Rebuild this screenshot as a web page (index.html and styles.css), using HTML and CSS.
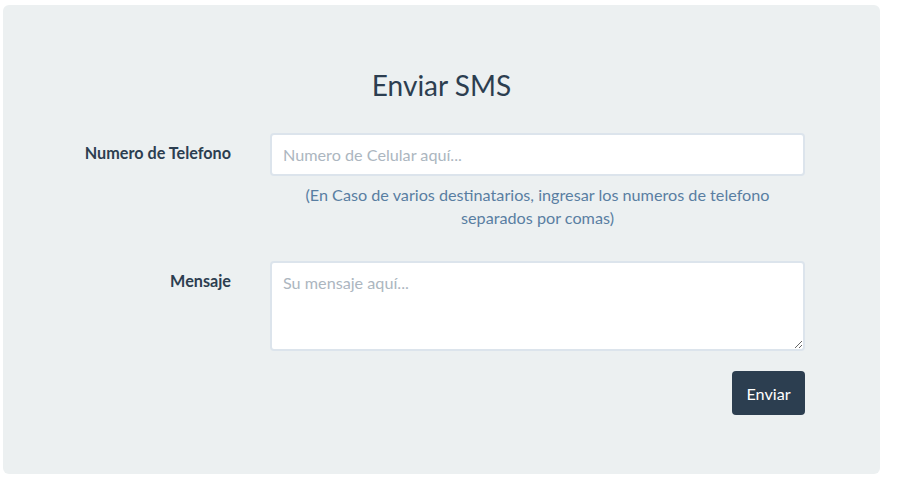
FILE: index.html
```html
<!DOCTYPE html>
<html lang="es">
<head>
<meta charset="utf-8">
<title>Enviar SMS</title>
<link rel="stylesheet" href="styles.css">
</head>
<body>
<div class="panel">
  <h3 class="title">Enviar SMS</h3>
  <form class="form">
    <label class="label" for="tel">Numero de Telefono</label>
    <div class="field">
      <input id="tel" class="control" type="text" placeholder="Numero de Celular aquí...">
      <p class="help">(En Caso de varios destinatarios, ingresar los numeros de telefono separados por comas)</p>
    </div>
    <label class="label" for="msg">Mensaje</label>
    <div class="field">
      <textarea id="msg" class="control area" placeholder="Su mensaje aquí..."></textarea>
      <div class="actions"><button type="button" class="btn">Enviar</button></div>
    </div>
  </form>
</div>
</body>
</html>
```

FILE: styles.css
```css
* { box-sizing: border-box; }
html, body { margin: 0; background: #fff; }
body {
  font-family: Lato, "Open Sans", sans-serif;
  font-size: 16.2px;
  line-height: 1.42857;
  color: #2c3e50;
}
.panel {
  margin: 5px 0 0 3px;
  width: 877px;
  height: 469px;
  background: #ecf0f1;
  border-radius: 6px;
  padding-top: 65px;
}
.title {
  margin: 0;
  font-size: 28px;
  font-weight: 400;
  line-height: 1.1;
  text-align: center;
}
.form {
  margin-top: 32px;
  display: grid;
  grid-template-columns: 228px 535px;
  column-gap: 39px;
  align-items: start;
}
.label {
  text-align: right;
  font-weight: 700;
  padding-top: 8px;
}
.field { display: flex; flex-direction: column; }
.control {
  display: block;
  width: 535px;
  height: 43px;
  border: 2px solid #dce4ec;
  border-radius: 4px;
  background: #fff;
  padding: 0 11px;
  font-family: inherit;
  font-size: 16.2px;
  line-height: 1.42857;
  color: #2c3e50;
  outline: none;
}
.control::placeholder { color: #acb6c0; opacity: 1; }
.area { height: 90px; padding: 8px 11px; resize: vertical; }
.help {
  margin: 7px 0 32px;
  color: #597ea2;
  text-align: center;
  padding: 0 20px;
}
.actions { display: flex; justify-content: flex-end; margin-top: 20px; }
.btn {
  height: 44px;
  width: 73px;
  padding: 0;
  border: 0;
  border-radius: 4px;
  background: #2c3e50;
  color: #fff;
  font-family: inherit;
  font-size: 16.2px;
}
```
